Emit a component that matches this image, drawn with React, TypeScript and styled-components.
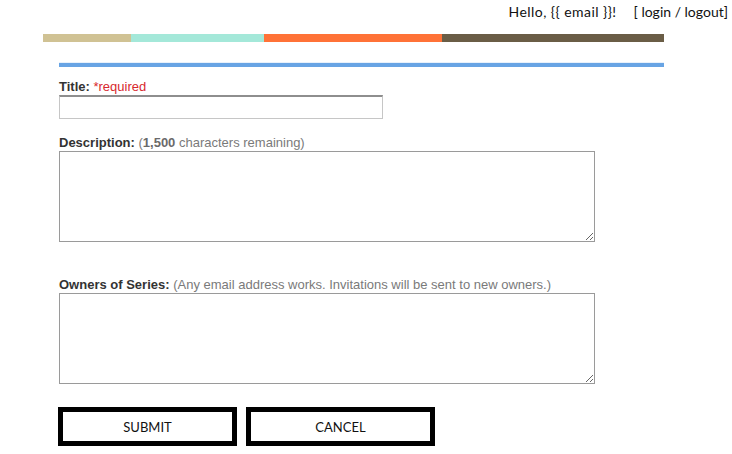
import styled, { createGlobalStyle } from "styled-components";

const GlobalStyle = createGlobalStyle`
  html, body {
    margin: 0;
    padding: 0;
    background: #fff;
  }
`;

const Page = styled.div`
  width: 732px;
  height: 454px;
  overflow: hidden;
`;

const TopBar = styled.div`
  height: 22px;
  padding-right: 4px;

  display: flex;
  justify-content: flex-end;
  align-items: center;
  gap: 17px;

  font-family: Lato, "Open Sans", sans-serif;
  font-size: 14px;
  color: #111;
`;

const Greeting = styled.span`
  letter-spacing: 0.45px;
`;

const ColorStrip = styled.div`
  margin: 12px 0 0 43px;
  width: 621px;
  height: 8px;

  display: flex;
`;

const StripSegment = styled.div<{ $color: string; $width: number }>`
  width: ${({ $width }) => $width}px;
  background-color: ${({ $color }) => $color};
`;

const FormRoot = styled.form`
  margin: 21px 0 0 59px;
  width: 605px;

  border-top: 4px solid #68a4e4;
  box-shadow: 0 -1px 0 rgba(104, 164, 228, 0.15);

  font-family: "Liberation Sans", Arial, sans-serif;
  font-size: 13px;
`;

const Field = styled.div<{ $top: number }>`
  margin-top: ${({ $top }) => $top}px;
  display: flex;
  flex-direction: column;
`;

const Label = styled.label`
  height: 16px;
  line-height: 16px;

  font-weight: 700;
  color: #333;
  white-space: nowrap;
`;

const Hint = styled.span`
  font-weight: 400;
  color: #7a7a7a;

  & b {
    font-weight: 700;
    color: #6a6a6a;
  }
`;

const Required = styled.span`
  font-weight: 400;
  color: #d8282e;
`;

const TextInput = styled.input`
  box-sizing: border-box;
  width: 324px;
  height: 24px;
  margin: 0;

  border: 1px solid #c6c6c6;
  border-top-color: #8e8e8e;
  border-top-width: 2px;
  background: #fff;
  outline: none;
`;

const TextArea = styled.textarea`
  box-sizing: border-box;
  width: 536px;
  height: 91px;
  margin: 0;

  border: 1px solid #9a9a9a;
  background: #fff;
  outline: none;
  font-family: inherit;
`;

const Actions = styled.div`
  margin: 23px 0 0 -1px;

  display: flex;
  gap: 9px;
`;

const ActionButton = styled.button<{ $width: number }>`
  box-sizing: border-box;
  width: ${({ $width }) => $width}px;
  height: 39px;
  padding: 0;

  border: 5px solid #000;
  background: #fff;

  font-family: Lato, "Open Sans", sans-serif;
  font-size: 13px;
  color: #111;
  cursor: pointer;
`;

const segments = [
  { color: "#d0c294", width: 88 },
  { color: "#a4e8d9", width: 133 },
  { color: "#ff7237", width: 178 },
  { color: "#6a5d46", width: 222 },
];

function App() {
  return (
    <Page>
      <GlobalStyle />

      <TopBar>
        <Greeting>Hello, {"{{ email }}"}!</Greeting>
        <span>[ login / logout]</span>
      </TopBar>

      <ColorStrip>
        {segments.map((s) => (
          <StripSegment key={s.color} $color={s.color} $width={s.width} />
        ))}
      </ColorStrip>

      <FormRoot onSubmit={(e) => e.preventDefault()}>
        <Field $top={12}>
          <Label>
            Title: <Required>*required</Required>
          </Label>
          <TextInput type="text" />
        </Field>

        <Field $top={16}>
          <Label>
            Description: <Hint>(<b>1,500</b> characters remaining)</Hint>
          </Label>
          <TextArea />
        </Field>

        <Field $top={35}>
          <Label>
            Owners of Series:{" "}
            <Hint>(Any email address works. Invitations will be sent to new owners.)</Hint>
          </Label>
          <TextArea />
        </Field>

        <Actions>
          <ActionButton type="submit" $width={179}>SUBMIT</ActionButton>
          <ActionButton type="button" $width={189}>CANCEL</ActionButton>
        </Actions>
      </FormRoot>
    </Page>
  );
}

export default App;
